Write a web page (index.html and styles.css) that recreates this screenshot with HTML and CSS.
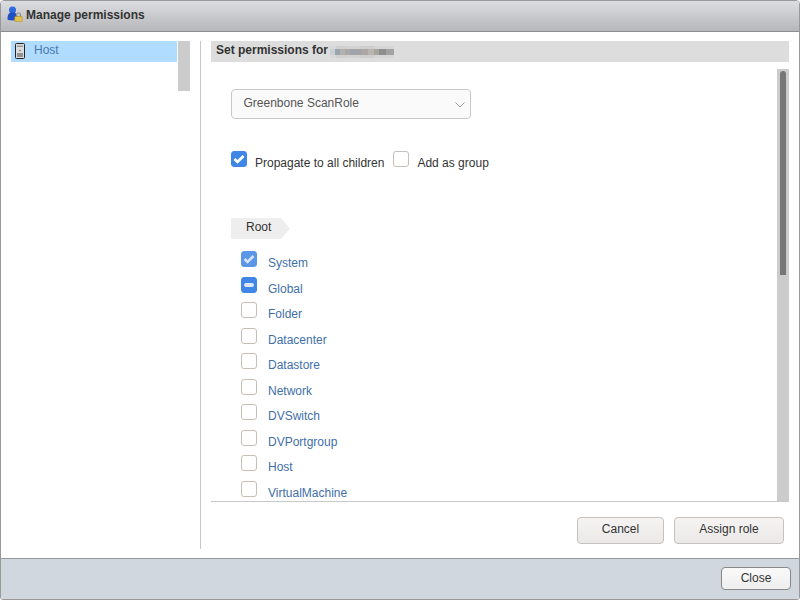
FILE: index.html
```html
<!DOCTYPE html>
<html lang="en">
<head>
<meta charset="utf-8">
<title>Manage permissions</title>
<link rel="stylesheet" href="styles.css">
</head>
<body>
<div class="window">
  <header class="titlebar">
    <svg class="title-icon" width="16" height="16" viewBox="0 0 16 16">
      <circle cx="5.500" cy="4" r="3.500" fill="#2f6ae0"/>
      <path d="M.5 13.500c0-5.500 1.500-7 5-7s5 1.500 5 7c-2 1.200-8 1.200-10 0z" fill="#1f4fc0"/>
      <path d="M9.500 10.500v-1.500a2 2 0 0 1 4 0v1.500" fill="none" stroke="#8f8f80" stroke-width="1.200"/>
      <rect x="7.800" y="10.500" width="7.400" height="5" rx=".6" fill="#e3c34f" stroke="#b0902c" stroke-width=".6"/>
    </svg>
    <span>Manage permissions</span>
  </header>
  <main class="content">
    <aside class="sidebar">
      <div class="tree">
        <div class="tree-row">
          <svg width="12" height="16" viewBox="0 0 12 16">
            <rect x="1.500" y=".5" width="9" height="15" rx="1" fill="#dcdcdc" stroke="#222"/>
            <rect x="3" y="2.500" width="6" height="1.500" fill="#999"/>
            <circle cx="6" cy="7.500" r=".8" fill="#666"/>
            <rect x="3" y="10.500" width="6" height="1" fill="#444"/>
            <rect x="3" y="12.500" width="6" height="1" fill="#444"/>
          </svg>
          <span>Host</span>
        </div>
        <div class="tree-scroll"></div>
      </div>
    </aside>
    <section class="panel">
      <h2 class="panel-head">Set permissions for <span class="redacted"></span></h2>
      <div class="scroll-area">
        <div class="form">
          <div class="select">
            <span>Greenbone ScanRole</span>
            <svg width="10" height="6" viewBox="0 0 10 6"><path d="M.5.5 5 5 9.500.5" fill="none" stroke="#999"/></svg>
          </div>
          <div class="options">
            <span class="check on"><svg width="12" height="10" viewBox="0 0 12 10"><path d="M1.500 5 4.500 8 10.500 2" fill="none" stroke="#fff" stroke-width="2.600"/></svg></span>
            <label class="opt-a">Propagate to all children</label>
            <span class="check"></span>
            <label class="opt-b">Add as group</label>
          </div>
          <div class="tag">Root</div>
          <ul class="privs">
            <li><span class="check faded"><svg width="12" height="10" viewBox="0 0 12 10"><path d="M1.500 5 4.500 8 10.500 2" fill="none" stroke="#d5e4f8" stroke-width="2.600"/></svg></span><span class="priv">System</span></li>
            <li><span class="check on"><i class="dash"></i></span><span class="priv">Global</span></li>
            <li><span class="check"></span><span class="priv">Folder</span></li>
            <li><span class="check"></span><span class="priv">Datacenter</span></li>
            <li><span class="check"></span><span class="priv">Datastore</span></li>
            <li><span class="check"></span><span class="priv">Network</span></li>
            <li><span class="check"></span><span class="priv">DVSwitch</span></li>
            <li><span class="check"></span><span class="priv">DVPortgroup</span></li>
            <li><span class="check"></span><span class="priv">Host</span></li>
            <li><span class="check"></span><span class="priv">VirtualMachine</span></li>
          </ul>
        </div>
        <div class="scrollbar"><div class="thumb"></div></div>
      </div>
      <div class="actions">
        <button class="btn cancel">Cancel</button>
        <button class="btn assign">Assign role</button>
      </div>
    </section>
  </main>
  <footer class="footer">
    <button class="btn close">Close</button>
  </footer>
</div>
</body>
</html>
```
FILE: styles.css
```css
* { box-sizing: border-box; }
html, body { margin: 0; padding: 0; }
body { width: 800px; height: 600px; overflow: hidden; background: #fff; font-family: "Liberation Sans", Arial, sans-serif; font-size: 12px; color: #333; }
.window { width: 800px; height: 600px; display: flex; flex-direction: column; border: 1px solid #999; border-radius: 4px 4px 3px 3px; overflow: hidden; background: #fff; }
.titlebar { height: 31px; flex: none; display: flex; align-items: center; gap: 3px; padding: 0 0 3px 6px; background: linear-gradient(#dcdde0, #b5b7ba); border-bottom: 1px solid #8e8e8e; font-weight: bold; color: #333; }
.title-icon { flex: none; margin-top: -2px; }
.content { flex: 1; min-height: 0; display: flex; padding: 9px 10px 9px 10px; }
.sidebar { width: 190px; flex: none; border-right: 1px solid #c8c8c8; }
.tree { display: flex; gap: 1px; }
.tree-row { width: 166px; height: 21px; display: flex; align-items: flex-start; gap: 8px; padding: 2px 0 0 3px; background: #b0dcff; color: #4a78ae; line-height: 15px; }
.tree-scroll { width: 12px; height: 50px; background: #ccc; }
.panel { flex: 1; min-width: 0; margin-left: 10px; display: flex; flex-direction: column; }
.panel-head { margin: 0; height: 21px; flex: none; display: flex; align-items: center; padding: 0 0 3px 5px; background: #ddd; font-size: 12px; font-weight: bold; color: #333; white-space: pre; }
.redacted { display: block; width: 64px; height: 12px; margin: 3px 0 0 -1px;
  background:
    linear-gradient(90deg, #c8d0d4 0 8%, #9aa6ae 8% 16%, #b5b0ac 16% 24%, #a8a8a8 24% 32%, #9ea4aa 32% 48%, #aca6a4 48% 60%, #b8b4b0 60% 68%, #a8a49e 68% 76%, #8e8e8e 76% 88%, #a2a2a2 88% 100%) 0 3px / 100% 6px no-repeat,
    linear-gradient(90deg, #d8d8d8 0 10%, #d0d0d0 10% 25%, #d6d2d0 25% 45%, #cfcfcf 45% 70%, #d6d6d6 70% 100%); }
.scroll-area { margin-top: 7px; height: 433px; flex: none; display: flex; overflow: hidden; border-bottom: 1px solid #c8c8c8; }
.form { flex: 1; min-width: 0; padding: 20px 0 0 20px; overflow: hidden; }
.select { width: 240px; height: 30px; display: flex; align-items: center; justify-content: space-between; padding: 0 5px 3px 11.500px; background: #fafafa; border: 1px solid #c8c8c8; border-radius: 4px; color: #555; }
.select svg { margin-top: 5px; }
.options { margin-top: 32px; display: flex; align-items: flex-start; }
.check { width: 16px; height: 16px; flex: none; display: flex; align-items: center; justify-content: center; background: #fff; border: 1px solid #c5bfb8; border-radius: 3px; }
.check.on { background: #3f86e6; border-color: #3f86e6; }
.check.faded { background: #5b96e8; border-color: #5b96e8; }
.dash { display: block; width: 10px; height: 4px; border-radius: 2px; background: #dce8f8; }
.opt-a { margin: 5px 9px 0 8px; line-height: 15px; color: #333; }
.opt-b { margin: 5px 0 0 8px; line-height: 15px; color: #333; }
.tag { margin-top: 47px; width: 59px; height: 21px; padding: 1px 0 0 15px; line-height: 17px; background: #eee; clip-path: polygon(0 0, 50px 0, 59px 50%, 50px 100%, 0 100%); color: #333; }
.privs { list-style: none; margin: 12px 0 0; padding: 0 0 0 10px; }
.privs li { height: 25.500px; display: flex; align-items: flex-start; }
.priv { margin: 5px 0 0 11px; line-height: 15px; color: #3f6fa8; }
.scrollbar { width: 12px; height: 432px; flex: none; padding: 2px 3px; background: #ccc; }
.thumb { height: 204px; background: #777; border-radius: 3px 3px 0 0; }
.actions { flex: 1; display: flex; justify-content: flex-end; align-items: flex-start; gap: 10px; padding: 15px 5px 0 0; }
.btn { font: 12px "Liberation Sans", Arial, sans-serif; color: #333; background: linear-gradient(#f5f4f3, #ebe9e7); border: 1px solid #c5c1bc; border-radius: 4px; padding: 0 0 3px; }
.cancel { width: 87px; height: 27px; }
.assign { width: 110px; height: 27px; }
.footer { height: 41px; flex: none; display: flex; justify-content: flex-end; padding: 8px 8px 0 0; background: #d0d7df; border-top: 1px solid #999; }
.close { width: 70px; height: 23px; border-color: #888; background: linear-gradient(#fafafa, #eee); padding: 0 0 2px; }
```
